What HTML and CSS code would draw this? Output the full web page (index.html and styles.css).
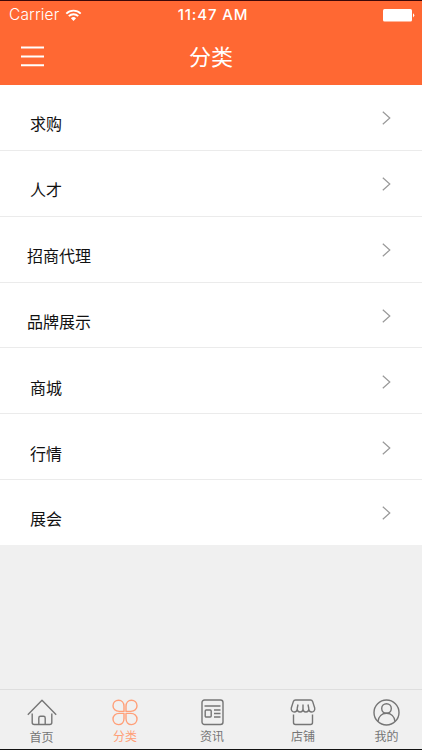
FILE: index.html
```html
<!DOCTYPE html>
<html lang="zh-CN">
<head>
<meta charset="utf-8">
<title>分类</title>
<link rel="stylesheet" href="styles.css">
</head>
<body>
<div class="app">
  <header class="header">
    <div class="status">
      <div class="carrier">
        <span>Carrier</span>
        <svg width="17" height="13" viewBox="0 0 16 13" fill="none" stroke="#fff" stroke-width="1.9">
          <path d="M.8 4.6a10.2 10.2 0 0 1 14.4 0"/>
          <path d="M3.3 7.2a6.6 6.6 0 0 1 9.4 0"/>
          <path d="M5.4 9.2a3.7 3.7 0 0 1 5.2 0L8 11.9z" fill="#fff" stroke="none"/>
        </svg>
      </div>
      <div class="clock">11:47 AM</div>
      <svg class="battery" width="32" height="13" viewBox="0 0 32 13" fill="#fff">
        <rect x="0" y="0" width="29" height="12.6" rx="1.5"/>
        <path d="M30 4.2q2.6 2.1 0 4.2z"/>
      </svg>
    </div>
    <div class="titlebar">
      <svg class="menu" width="23" height="21" viewBox="0 0 23 21" stroke="#fff" stroke-width="2">
        <path d="M0 1.6h23M0 10.4h23M0 19.2h23"/>
      </svg>
      <h1>分类</h1>
    </div>
  </header>
  <main class="list">
    <a class="row"><span>求购</span><svg class="chevron" viewBox="0 0 9 14"><path d="M.8.7l7 6.3-7 6.3"/></svg></a>
    <a class="row"><span>人才</span><svg class="chevron" viewBox="0 0 9 14"><path d="M.8.7l7 6.3-7 6.3"/></svg></a>
    <a class="row wide"><span>招商代理</span><svg class="chevron" viewBox="0 0 9 14"><path d="M.8.7l7 6.3-7 6.3"/></svg></a>
    <a class="row wide"><span>品牌展示</span><svg class="chevron" viewBox="0 0 9 14"><path d="M.8.7l7 6.3-7 6.3"/></svg></a>
    <a class="row"><span>商城</span><svg class="chevron" viewBox="0 0 9 14"><path d="M.8.7l7 6.3-7 6.3"/></svg></a>
    <a class="row"><span>行情</span><svg class="chevron" viewBox="0 0 9 14"><path d="M.8.7l7 6.3-7 6.3"/></svg></a>
    <a class="row"><span>展会</span><svg class="chevron" viewBox="0 0 9 14"><path d="M.8.7l7 6.3-7 6.3"/></svg></a>
  </main>
  <nav class="tabs">
    <a class="tab home">
      <svg width="30" height="27" viewBox="0 0 30 27"><path d="M.8 15.8L15 1.3l14.2 14.5M5.2 14.5v9q0 2 2 2h15.6q2 0 2-2v-9M11.8 25.5V19q0-1.7 1.7-1.7h3q1.7 0 1.7 1.7v6.5"/></svg>
      <span>首页</span>
    </a>
    <a class="tab active">
      <svg width="26" height="27" viewBox="0 0 26 27"><path id="petal" d="M12 12.400H7.200C3.500 12.400 1 10 1 6.700S3.500 1.200 6.600 1.200 12 3.700 12 7.200z"/><use href="#petal" transform="matrix(-1 0 0 1 26 0)"/><use href="#petal" transform="matrix(1 0 0 -1 0 26.800)"/><use href="#petal" transform="matrix(-1 0 0 -1 26 26.800)"/></svg>
      <span>分类</span>
    </a>
    <a class="tab">
      <svg width="23" height="27" viewBox="0 0 23 27"><rect x="1" y="1" width="21" height="24.5" rx="2.5"/><path d="M3.5 7h16M13 11h6.5M13 14.5h6.5M13 18h6.5"/><rect x="4.2" y="11" width="6" height="7" rx="1"/></svg>
      <span>资讯</span>
    </a>
    <a class="tab">
      <svg width="26" height="27" viewBox="0 0 26 27"><path d="M5.5 1h15q1.6 0 2.1 1.4L24.7 9c.5 2.200-1 4-2.900 4s-3-1.500-3-3.500q0 3.500-2.900 3.500T13 9.500q0 3.500-2.900 3.500T7.200 9.500c0 2-1.200 3.500-3 3.500s-3.400-1.800-2.900-4l2.100-6.600Q3.900 1 5.500 1zM7.200 9.500L8 5.500M13 9.500v-4M18.800 9.500L18 5.500M3.500 15.500v8q0 2 2 2h15q2 0 2-2v-8"/></svg>
      <span>店铺</span>
    </a>
    <a class="tab">
      <svg width="27" height="27" viewBox="0 0 27 27"><circle cx="13.5" cy="13.5" r="12.5"/><circle cx="13.5" cy="9.5" r="4.8"/><path d="M5 22.5c.5-5 4-8.200 8.500-8.200s8 3.200 8.500 8.200"/></svg>
      <span>我的</span>
    </a>
  </nav>
</div>
</body>
</html>
```
FILE: styles.css
```css
* { box-sizing: border-box; }
body {
  margin: 0;
  font-family: Inter, "Noto Sans CJK SC", sans-serif;
}
.app {
  width: 422px;
  height: 750px;
  display: flex;
  flex-direction: column;
  background: #f0f0f0;
  border-top: 1px solid #3c0808;
  border-bottom: 1px solid #111;
}
.header {
  height: 84px;
  background: #ff6833;
  color: #fff;
}
.status {
  height: 27px;
  display: grid;
  grid-template-columns: 1fr auto 1fr;
  align-items: center;
  padding: 0 7px 0 9px;
  font-size: 15.5px;
  line-height: 28px;
}
.carrier {
  display: flex;
  align-items: center;
  gap: 6px;
  letter-spacing: .15px;
  font-weight: 300;
}
.clock {
  padding-left: 2px;
  font-weight: 500;
  font-size: 15px;
  letter-spacing: .85px;
}
.battery { justify-self: end; }
.titlebar {
  height: 57px;
  display: grid;
  grid-template-columns: 1fr auto 1fr;
  align-items: center;
  padding: 0 21px;
}
h1 {
  margin: 0;
  font-size: 22px;
  line-height: 32px;
  font-weight: 400;
}
.list { background: #fff; }
.row {
  height: 65.85px;
  display: flex;
  justify-content: space-between;
  padding: 26.3px 31px 0 30px;
  border-bottom: 1px solid #ebebeb;
  color: #111;
  font-size: 16px;
  line-height: 26px;
}
.row.wide { padding-left: 27px; }
.row:last-child { height: 65px; border-bottom: 0; }
.chevron {
  width: 9px;
  height: 14px;
  fill: none;
  stroke: #999;
  stroke-width: 1.2;
}
.tabs {
  height: 60px;
  margin-top: auto;
  display: grid;
  grid-template-columns: 83px 84px 90px 92px 75px;
  border-top: 1px solid #dedede;
}
.tab {
  display: flex;
  flex-direction: column;
  align-items: center;
  padding-top: 9px;
  color: #757575;
  font-size: 12px;
  line-height: 18px;
}
.tab svg {
  flex: none;
  height: 27px;
  fill: none;
  stroke: currentColor;
  stroke-width: 1.4;
  stroke-linejoin: round;
}
.tab span { padding-top: 2px; }
.tab.home span { padding-top: 3px; }
.tab.active { color: #ff9f78; }
```
